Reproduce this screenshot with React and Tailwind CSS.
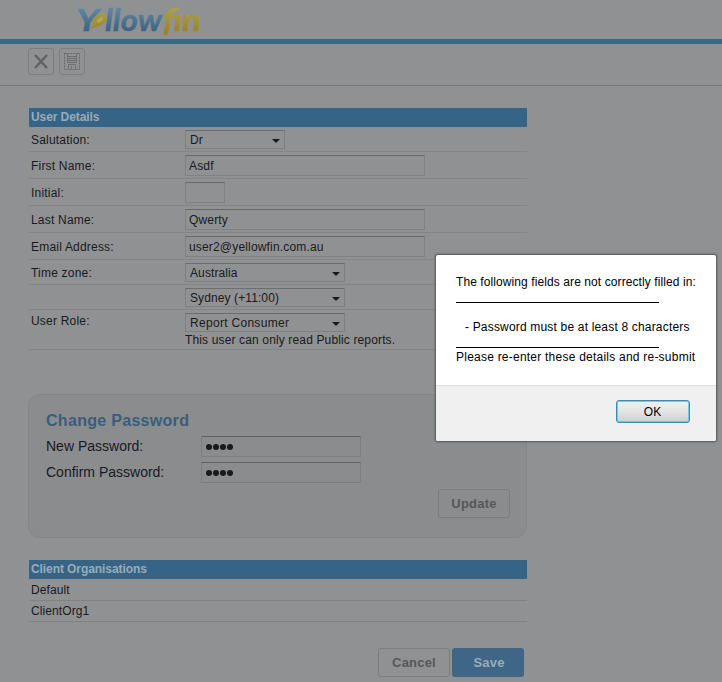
import React from "react";

const profileRows = [
  { label: "Salutation:", type: "select", value: "Dr", row: "h-[25px]", width: "w-[100px]" },
  { label: "First Name:", type: "input", value: "Asdf", row: "h-[27px]", width: "w-[240px]" },
  { label: "Initial:", type: "input", value: "", row: "h-[27px]", width: "w-10" },
  { label: "Last Name:", type: "input", value: "Qwerty", row: "h-[27px]", width: "w-[240px]" },
  { label: "Email Address:", type: "input", value: "user2@yellowfin.com.au", row: "h-[27px]", width: "w-[240px]" },
  { label: "Time zone:", type: "select", value: "Australia", row: "h-[25px]", width: "w-40" },
  { label: "", type: "select", value: "Sydney (+11:00)", row: "h-[25px]", width: "w-40" },
  {
    label: "User Role:",
    type: "select",
    value: "Report Consumer",
    row: "h-10",
    width: "w-40",
    note: "This user can only read Public reports.",
  },
];

const organisations = ["Default", "ClientOrg1"];

function Logo() {
  return (
    <svg width="126" height="38" viewBox="0 0 126 38" className="block overflow-visible" role="img" aria-label="Yellowfin">
      <defs>
        <linearGradient id="blue" gradientUnits="userSpaceOnUse" x1="0" y1="6" x2="0" y2="31">
          <stop offset="0.1" stopColor="#5f87a3" />
          <stop offset="1" stopColor="#3b6583" />
        </linearGradient>
        <linearGradient id="gold" gradientUnits="userSpaceOnUse" x1="0" y1="6" x2="0" y2="35">
          <stop offset="0.1" stopColor="#ada045" />
          <stop offset="1" stopColor="#978022" />
        </linearGradient>
      </defs>
      <g fontFamily="Lato, 'Open Sans', sans-serif" fontStyle="italic" fontWeight="700" fontSize="31" strokeWidth="0.5">
        <text x="-1" y="31" fill="url(#blue)" stroke="url(#blue)" textLength="23" lengthAdjust="spacingAndGlyphs">Y</text>
        <text x="28" y="31" fill="url(#blue)" stroke="url(#blue)" textLength="57" lengthAdjust="spacingAndGlyphs">llow</text>
        <text x="86" y="31" fill="url(#gold)" stroke="url(#gold)" textLength="38" lengthAdjust="spacingAndGlyphs">fin</text>
      </g>
      {/* fish standing in for the "e" */}
      <path d="M13 29L16 24L15 20L19 16L25 13L29 15L30 20L25 25L19 27L13 29Z" fill="url(#gold)" />
      <path d="M19 21L25 16L26 20L22 23Z" fill="#b0a660" />
    </svg>
  );
}

function TextInput({ value, width }) {
  return (
    <div className={`${width} h-[21px] shrink-0 border border-[#808182] border-t-[#66686a] flex items-center px-[3px] tracking-[0.17px]`}>
      {value}
    </div>
  );
}

function Select({ value, width }) {
  return (
    <div className={`${width} h-[19px] shrink-0 border border-[#7d7f81] border-t-[#6b6d70] flex items-center justify-between pl-1 pr-[4px] tracking-[0.1px]`}>
      <span className={value === "Report Consumer" ? "tracking-[0.3px]" : ""}>{value}</span>
      <svg width="8" height="4" viewBox="0 0 8 4" className="mt-0.5">
        <path d="M0 0H8L4 4Z" fill="#191a1c" />
      </svg>
    </div>
  );
}

function SectionHeader({ children }) {
  return (
    <div className="h-[19px] bg-[#366487] px-0.5 leading-[18px] font-bold text-[#9aabb8] tracking-[-0.08px]">
      {children}
    </div>
  );
}

function ProfileRow({ item }) {
  const Field = item.type === "select" ? Select : TextInput;
  const labelHeight = item.type === "select" ? (item.note ? "h-[22px]" : "h-[26px]") : "h-7";
  return (
    <div className={`${item.row} border-b border-[#838587] flex pl-0.5`}>
      <div className={`w-[154px] ${labelHeight} flex items-center tracking-[0.2px]`}>{item.label}</div>
      <div className="pt-[3px]">
        <Field value={item.value} width={item.width} />
        {item.note && <div className="leading-4 tracking-[0.14px]">{item.note}</div>}
      </div>
    </div>
  );
}

function PasswordRow({ label }) {
  return (
    <div className="h-[26px] flex items-start">
      <span className="w-[155px] text-sm leading-[21px]">{label}</span>
      <div className="w-40 h-[21px] border border-[#7c7e80] border-t-[#5f6163] pl-1 pt-[7px] flex items-start gap-[1.5px]">
        {[0, 1, 2, 3].map((dot) => (
          <span key={dot} className="size-[5.5px] rounded-full bg-[#191a1c]" />
        ))}
      </div>
    </div>
  );
}

function AlertDialog() {
  return (
    <div className="absolute left-[436px] top-[255px] w-[280px] h-[186px] bg-white text-black rounded-[2px] shadow-[0_0_2px_1px_#555]">
      <div className="h-[130px] px-5 pt-5 leading-[15px] whitespace-nowrap">
        <p className="tracking-[0.09px]">The following fields are not correctly filled in:</p>
        <div className="w-[203px] h-[13px] border-b border-black" />
        <p className="pt-[17px] pl-[9px] tracking-[0.18px]">- Password must be at least 8 characters</p>
        <div className="w-[203px] h-[13px] border-b border-black" />
        <p className="pt-0.5 tracking-[0.23px]">Please re-enter these details and re-submit</p>
      </div>
      <div className="h-14 bg-[#f0f0f0] border-t border-[#dfdfdf] rounded-b-[2px] flex justify-end pt-[14px] pr-[26px]">
        <button className="w-[74px] h-[23px] rounded-[3px] border border-[#3c8bad] ring-1 ring-inset ring-[#76c8e5] bg-linear-to-b from-[#f1f1f1] via-[#e4e4e4] to-[#cfcfcf] leading-5 pr-px">
          OK
        </button>
      </div>
    </div>
  );
}

export default function App() {
  return (
    <div className="relative w-[722px] h-[682px] overflow-hidden bg-[#909192] text-[#191a1e] text-xs font-['Liberation_Sans',Arial,sans-serif]">
      <header className="h-11 border-b-[5px] border-[#316c84] pl-[77px]">
        <Logo />
      </header>

      <div className="h-[42px] border-b border-[#747678] flex gap-[5px] pl-7 pt-1">
        <button className="w-[26px] h-[27px] rounded-[3px] border border-[#7d7e80] flex items-center justify-center">
          <svg width="14" height="15" viewBox="0 0 14 15" fill="none" stroke="#626365" strokeWidth="2.5">
            <path d="M1 1L13 14M13 1L1 14" />
          </svg>
        </button>
        <button className="w-[26px] h-[27px] rounded-[3px] border border-[#7d7e80] flex items-center justify-center">
          <svg width="16" height="17" viewBox="0 0 16 17" className="shrink-0" fill="none" stroke="#66686a">
            <path d="M.5 .5H15.5V16.5H.5Z" strokeDasharray="2 1" />
            <path d="M3.5 1V9.5H12.5V1M4 3.5H12M4 5.5H12M4 7.5H12M4.5 16V11.5H11.5V16M7.5 13V16" strokeWidth="0.8" />
          </svg>
        </button>
      </div>

      <main className="w-[499px] ml-[28px] pt-[22px]">
        <section className="ml-px">
          <SectionHeader>User Details</SectionHeader>
          {profileRows.map((item) => (
            <ProfileRow key={item.value + item.label} item={item} />
          ))}
        </section>

        <section className="mt-11 h-[144px] rounded-[12px] bg-[#8a8c8e] border border-[#848688] pl-[17px] pr-4 pt-[15px]">
          <h2 className="text-base leading-[22px] font-bold text-[#3b5d7b] mb-1 tracking-[0.3px]">Change Password</h2>
          <PasswordRow label="New Password:" />
          <PasswordRow label="Confirm Password:" />
          <div className="flex justify-end pt-px">
            <button className="w-[72px] h-[29px] rounded-[3px] border border-[#7b7d7f] text-[13px] font-bold text-[#55585a] tracking-[0.2px]">
              Update
            </button>
          </div>
        </section>

        <section className="ml-px mt-[22px]">
          <SectionHeader>Client Organisations</SectionHeader>
          <div className="pt-px">
            {organisations.map((name) => (
              <div key={name} className="h-[21px] border-b border-[#808284] pl-0.5 flex items-center tracking-[0.1px]">
                {name}
              </div>
            ))}
          </div>
        </section>

        <div className="mt-[26px] pr-[3px] flex justify-end gap-[2px] text-[13px] font-bold tracking-[0.2px]">
          <button className="w-[72px] h-[29px] rounded-[3px] border border-[#7b7d7f] text-[#55585a]">Cancel</button>
          <button className="w-[72px] h-[29px] rounded-[3px] bg-[#3f6686] text-[#9aabb8] pl-0.5">Save</button>
        </div>
      </main>

      <AlertDialog />
    </div>
  );
}
